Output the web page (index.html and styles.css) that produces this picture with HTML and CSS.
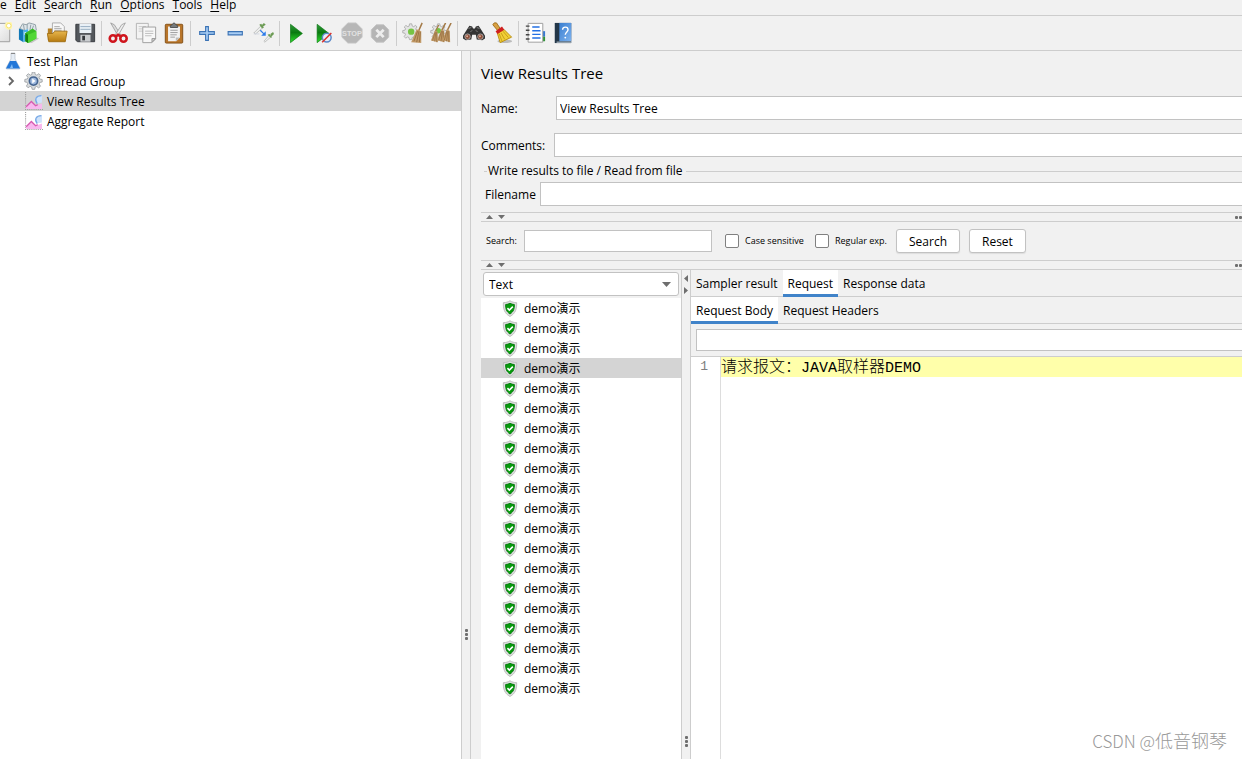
FILE: index.html
```html
<!DOCTYPE html>
<html lang="en">
<head>
<meta charset="utf-8">
<title>View Results Tree</title>
<link rel="stylesheet" href="styles.css">
</head>
<body>
<svg class="defs" aria-hidden="true">
  <defs>
    <linearGradient id="green" x1="0" y1="0" x2="0" y2="1"><stop offset="0" stop-color="#2f9a3a"/><stop offset=".45" stop-color="#0a7a10"/><stop offset="1" stop-color="#2fe02b"/></linearGradient>
    <linearGradient id="gold" x1="0" y1="0" x2="0" y2="1"><stop offset="0" stop-color="#e7b64c"/><stop offset="1" stop-color="#b67a10"/></linearGradient>
    <linearGradient id="paper" x1="0" y1="0" x2="1" y2="1"><stop offset="0" stop-color="#fff"/><stop offset="1" stop-color="#dcdcdc"/></linearGradient>
    <linearGradient id="blue" x1="0" y1="0" x2="1" y2="1"><stop offset="0" stop-color="#3b7fd0"/><stop offset="1" stop-color="#7db2ee"/></linearGradient>
    <g id="gear"><path d="M10 0h3l.6 3 2 .8L18 2l2 2.200-1.700 2.500.8 1.800 2.900.6v3l-3 .6-.8 1.900 1.800 2.600-2.200 2-2.500-1.700-1.800.8-.6 2.700h-3l-.6-2.800-1.900-.8-2.500 1.700-2-2.200 1.700-2.500-.8-1.900L1 12V9l3-.6.800-1.800L3 4.200l2.200-2.100 2.500 1.700 1.800-.8z"/></g>
    <symbol id="shield" viewBox="0 0 16 18"><path d="M8 .8C6 2.100 3.700 2.800 1 2.800 .6 9 2.200 14.500 8 17.400c5.800-2.900 7.400-8.400 7-14.600C12.300 2.800 10 2.100 8 .8z" fill="#dedede" stroke="#bdbdbd"/><path d="M8 3.500c-1.400.8-2.800 1.200-4.600 1.300C3.200 9 4.200 12.500 8 14.800c3.800-2.300 4.800-5.800 4.600-10C10.800 4.700 9.400 4.300 8 3.500z" fill="#079b0c" stroke="#0a7a12"/><path d="M5.300 8.600l2 2.100L11 7" fill="none" stroke="#fff" stroke-width="1.600"/></symbol>
    <symbol id="chart" viewBox="0 0 18 18"><path d="M1.500 0v16.500H18" fill="none" stroke="#9d9d9d" stroke-dasharray="1 1"/><path d="M2 14l5-5 4 4 6-2v5H2z" fill="#f8b8ee"/><path d="M2 14l5-5 4 4 2-1" fill="none" stroke="#d65ab0" stroke-width="1.200"/><path d="M17 3c-6 0-8 4-5 8l5-1z" fill="#cfe3fb"/><path d="M16.500 3.500c-5 0-7 3.500-4 7.500" fill="none" stroke="#7aaae6" stroke-width="1.200"/></symbol>
    <symbol id="broom" viewBox="0 0 12 22"><path d="M10.500 0L6 9" stroke="#a47a47" stroke-width="1.600"/><path d="M6 7l3 1.500L9.500 21 1 19z" fill="#c29a68"/><path d="M6 9L3 19M7 9l-1.500 11M8 9l0 12" stroke="#8d6537" stroke-width=".7" fill="none"/></symbol>
  </defs>
</svg>

<div class="app">
  <nav class="menubar" aria-label="Main menu">
    <button class="menu">e</button>
    <button class="menu"><u>E</u>dit</button>
    <button class="menu"><u>S</u>earch</button>
    <button class="menu"><u>R</u>un</button>
    <button class="menu"><u>O</u>ptions</button>
    <button class="menu"><u>T</u>ools</button>
    <button class="menu"><u>H</u>elp</button>
  </nav>

  <div class="toolbar" role="toolbar" aria-label="Tools">
    <button class="tool" aria-label="New"><svg viewBox="0 0 24 24"><path d="M3.500 1.500h18v20h-18z" fill="url(#paper)" stroke="#9a9a9a"/><circle cx="20.500" cy="4" r="4.500" fill="#fff6b0"/><circle cx="20.500" cy="4" r="2.500" fill="#fff" stroke="#f3df66"/></svg></button>
    <button class="tool" aria-label="Templates"><svg viewBox="0 0 24 24"><path d="M2 7l3-5 4 1 3-2 4 1 3 1 1 6-5 4z" fill="#dfe6ea" stroke="#8b9aa2"/><path d="M6 3l1 6M10 2l0 6M14 3l-1 6M17 4l-2 5" stroke="#8b9aa2"/><path d="M1 7l5 2v13l-5-3z" fill="#1178b8"/><path d="M6 9l5-1v12l-5 2z" fill="#48b2ea"/><path d="M7 11h2v3H7z" fill="#e8f6ff"/><path d="M20 17l3 1-8 5h-4z" fill="#aaa" opacity=".6"/><path d="M8 12l8-5 4 3v8l-9 5-3-2z" fill="#39bd25"/><path d="M8 12l3 2v9l-3-2z" fill="#167e0e"/><path d="M11 14l9-4v8l-9 5z" fill="#51d735"/></svg></button>
    <button class="tool" aria-label="Open"><svg viewBox="0 0 24 24"><path d="M2 7h5l2 2h11v11H2z" fill="#b78125"/><path d="M7 13V1h9l4 4v9z" fill="#f8f8f8" stroke="#aaa"/><path d="M9 5h6M9 7h8M9 9h8" stroke="#aaa"/><path d="M1.500 12.500l6 0 2-2.500h13.500L21 21.500H3z" fill="url(#gold)" stroke="#a26f13"/></svg></button>
    <button class="tool" aria-label="Save"><svg viewBox="0 0 24 24"><path d="M2 2.500h20.500v19H4l-2-1.500z" fill="#53575c" stroke="#33373b"/><path d="M6 2h13v10H6z" fill="#e9f0f6"/><path d="M7 5h11M7 8h11" stroke="#92a9bd"/><path d="M7 14h11v7.500H7z" fill="#c9cccf"/><path d="M9 15h3v5H9z" fill="#33373b"/></svg></button>
    <span class="sep"></span>
    <button class="tool" aria-label="Cut"><svg viewBox="0 0 24 24"><path d="M4 1l4 2 7 11-3 1z" fill="#ddd" stroke="#929292" stroke-width=".8"/><path d="M20 1l-4 2-7 11 3 1z" fill="#eee" stroke="#929292" stroke-width=".8"/><g fill="none" stroke="#cf151d" stroke-width="2.800"><ellipse cx="6.500" cy="18" rx="3.500" ry="3.500"/><ellipse cx="18" cy="18" rx="3.500" ry="3.500"/><path d="M9.500 16l2.500-2 3.500 2"/></g></svg></button>
    <button class="tool" aria-label="Copy"><svg viewBox="0 0 24 24"><path d="M1.500 1.500h13v17h-13z" fill="#f3f3f3" stroke="#b0b0b0"/><path d="M4 5h8M4 7.500h8M4 10h8" stroke="#c8c8c8"/><path d="M8.500 5.500h14v13l-4 4h-10z" fill="#f7f7f7" stroke="#9b9b9b"/><path d="M11 10h9M11 12.500h9M11 15h7" stroke="#bbb"/><path d="M18.500 22v-4h4z" fill="#ccc" stroke="#999"/></svg></button>
    <button class="tool" aria-label="Paste"><svg viewBox="0 0 24 24"><rect x="2.500" y="2.500" width="19" height="20.500" rx="1" fill="#b8752a" stroke="#7f4d14"/><path d="M5.500 5h13v12l-4 4h-9z" fill="#f2f2f2"/><path d="M8 9h8M8 11.500h8M8 14h7M8 16.500h5" stroke="#999"/><path d="M14 21v-4h4.500z" fill="#bbb"/><path d="M8 6V4l2-1q2-4 4 0l2 1v2z" fill="#777b7c" stroke="#4a4e50"/></svg></button>
    <span class="sep"></span>
    <button class="tool" aria-label="Expand all"><svg viewBox="0 0 24 24"><path d="M10.500 5h3v5.500H20v3h-6.500V20h-3v-6.500H4v-3h6.500z" fill="#a8cdf4" stroke="#3b73b5" stroke-width="1.200"/></svg></button>
    <button class="tool" aria-label="Collapse all"><svg viewBox="0 0 24 24"><path d="M4.500 10.500h15.500v3.500H4.500z" fill="#a8cdf4" stroke="#3b73b5" stroke-width="1.200"/></svg></button>
    <button class="tool" aria-label="Toggle"><svg viewBox="0 0 24 24"><path d="M2 12l8-8 2 2-8 7z" fill="#eef0ee" stroke="#aaa" stroke-width=".7"/><path d="M8 3l2-1 3 4-2 1zM11 3l2-2 2 2-3 2z" fill="#6d9c55"/><path d="M13 21l6-7 2 2-7 6z" fill="#eef0ee" stroke="#aaa" stroke-width=".7"/><path d="M17 14l2-1 3 4-2 0zM20 13l3-2 1 2-3 3z" fill="#6d9c55"/><path d="M2 13h6" stroke="#cfd5df"/><path d="M9 9l4 4" stroke="#2d7bea" stroke-width="1.400"/><path d="M15 10v5h-5z" fill="#2d7bea"/></svg></button>
    <span class="sep"></span>
    <button class="tool" aria-label="Start"><svg viewBox="0 0 24 24"><path d="M6 2.500l13 10-13 10z" fill="url(#green)" stroke="#0a7510" stroke-width=".7"/></svg></button>
    <button class="tool" aria-label="Start no pauses"><svg viewBox="0 0 24 24"><path d="M4.500 2.500l13 10-13 10z" fill="url(#green)" stroke="#0a7510" stroke-width=".7"/><circle cx="15" cy="17" r="4.800" fill="#e5eefb" stroke="#5a88c8" stroke-width="1.600"/><path d="M10 22l10-10" stroke="#dd3029" stroke-width="1.600"/></svg></button>
    <button class="tool" aria-label="Stop" disabled><svg viewBox="0 0 24 24"><path d="M7.500 1h9L23 7.500v9L16.500 23h-9L1 16.500v-9z" fill="#b7b7b7" stroke="#c7c7c7"/><text x="12" y="15.500" class="stop-text">STOP</text></svg></button>
    <button class="tool" aria-label="Shutdown" disabled><svg viewBox="0 0 24 24"><path d="M8 3h8l5.500 5.500v8L16 22H8l-5.500-5.500v-8z" fill="#b5b5b5" stroke="#c3c3c3"/><path d="M8 8.500l8 8M16 8.500l-8 8" stroke="#ededed" stroke-width="3"/></svg></button>
    <span class="sep"></span>
    <button class="tool" aria-label="Clear"><svg viewBox="0 0 24 24"><g fill="#e4e4e4" stroke="#a2a2a2"><use href="#gear" transform="translate(0 2) scale(.82)"/></g><circle cx="10" cy="10.500" r="3.500" fill="#76c443"/><path d="M22 1l-4 9" stroke="#a47a47" stroke-width="1.600"/><path d="M16 8l5 2 0 13-11-1z" fill="#c29a68"/><path d="M17 10l-4 11M18.500 10l-2.500 12M20 11l-1 11" stroke="#8d6537" stroke-width=".8" fill="none"/></svg></button>
    <button class="tool" aria-label="Clear all"><svg viewBox="0 0 24 24"><g fill="#e4e4e4" stroke="#a2a2a2"><use href="#gear" transform="translate(0 2) scale(.82)"/></g><circle cx="9" cy="9.500" r="3" fill="#76c443"/><use href="#broom" x="0" y="3" width="11" height="20"/><use href="#broom" x="6" y="1" width="13" height="22"/><use href="#broom" x="12" y="1" width="13" height="22"/></svg></button>
    <span class="sep"></span>
    <button class="tool" aria-label="Search"><svg viewBox="0 0 24 24"><path d="M5 7l2-3 3 1 1 2h2l1-2 3-1 2 3 5 8v3l-3 2-6-1-1-5h-4l-1 5-6 1-3-2v-3z" fill="#343434"/><path d="M6 7l3-1M15 6l3 1M8 11l2-2M14 9l2 2" stroke="#888"/><circle cx="5" cy="16" r="3" fill="#8e4f38" stroke="#aaa"/><circle cx="19" cy="16" r="3" fill="#8e4f38" stroke="#aaa"/><circle cx="4.500" cy="15.500" r="1" fill="#e2b09d"/><circle cx="18.500" cy="15.500" r="1" fill="#e2b09d"/></svg></button>
    <button class="tool" aria-label="Reset search"><svg viewBox="0 0 24 24"><ellipse cx="15" cy="21" rx="8" ry="2" fill="#bbb"/><path d="M2 3q1-3 4-2l4 6-3 2z" fill="#d9a142" stroke="#9d6b1c"/><path d="M7 12.500l7-4.500 8.500 8.500-12.500 6z" fill="#f1cf36" stroke="#b98d12"/><path d="M9 13l3 8M11 12l4 7M13 10l6 7" stroke="#c69b1a" fill="none"/><path d="M5 10l7-5 2.500 3.500-7.500 4.500z" fill="#cf2020"/></svg></button>
    <span class="sep"></span>
    <button class="tool" aria-label="Function helper"><svg viewBox="0 0 24 24"><path d="M19 10h4v6h-4z" fill="#3478d4"/><path d="M19 16h4v5h-4z" fill="#319538"/><path d="M4.500 1.500h16v20.500h-16z" fill="#fff" stroke="#999"/><path d="M9 5.500h8M9 9.500h9M9 13.500h9M9 17.500h9" stroke="#2370e4" stroke-width="1.500"/><path d="M2 4.500h4M2 9h4M2 14h4M2 18.500h4" stroke="#444" stroke-width="1.600"/></svg></button>
    <button class="tool" aria-label="Help"><svg viewBox="0 0 24 24"><path d="M3 1h18v22H3z" fill="#233648"/><path d="M8 1h13v20H8z" fill="url(#blue)"/><path d="M5 22h16" stroke="#dce7ee"/><path d="M11.500 8.500c.4-4 6-3.800 6 0 0 2.300-3 2.500-3 5.500" fill="none" stroke="#fff" stroke-width="1.500"/><circle cx="14.500" cy="17" r="1" fill="#fff"/></svg></button>
  </div>

  <main class="workspace">
    <aside class="plan">
      <ul class="plan-tree">
        <li class="plan-row root"><svg class="flask" viewBox="0 0 16 18"><path d="M6 1h4v6l5 9q0 1-1 1H2q-1 0-1-1l5-9z" fill="#e6edf5" stroke="#b4bfca" stroke-width=".7"/><path d="M5 9h6l4 7.500H1z" fill="#2277d8"/><path d="M7 12l-2 4h3z" fill="#83bdf5"/><path d="M6 1.500h4" stroke="#888"/></svg><span>Test Plan</span></li>
        <li class="plan-row branch"><svg class="twisty" viewBox="0 0 10 10"><path d="M3 1l4 4-4 4" fill="none" stroke="#666" stroke-width="1.800"/></svg><svg class="icon" viewBox="0 0 23 23"><g fill="#d9dcde" stroke="#9a9ea2"><use href="#gear"/></g><circle cx="11.500" cy="11" r="5" fill="#9eb9df" stroke="#45648f" stroke-width="2"/><path d="M10 8l4 3-4 3z" fill="#fff"/></svg><span>Thread Group</span></li>
        <li class="plan-row leaf selected"><svg class="icon"><use href="#chart"/></svg><span>View Results Tree</span></li>
        <li class="plan-row leaf"><svg class="icon"><use href="#chart"/></svg><span>Aggregate Report</span></li>
      </ul>
    </aside>

    <div class="divider-v main-divider"><span class="dots-v"><i></i><i></i><i></i></span></div>

    <section class="editor">
      <h1 class="title">View Results Tree</h1>
      <div class="field name-field"><label for="name">Name:</label><input id="name" class="box" type="text" value="View Results Tree"></div>
      <div class="field comments-field"><label for="comments">Comments:</label><input id="comments" class="box" type="text"></div>
      <div class="group-head"><span>Write results to file / Read from file</span></div>
      <div class="field file-field"><label for="filename">Filename</label><input id="filename" class="box" type="text"></div>

      <div class="divider-h"><svg class="arrows" viewBox="0 0 22 8"><path d="M1 6l3.500-4L8 6zM13 2h7l-3.500 4z"/></svg><span class="dots-h"><i></i><i></i></span></div>

      <form class="search-bar">
        <label class="small" for="query">Search:</label>
        <input id="query" class="box query" type="text">
        <label class="small check case"><input type="checkbox">Case sensitive</label>
        <label class="small check regex"><input type="checkbox">Regular exp.</label>
        <button class="btn" type="button">Search</button>
        <button class="btn" type="reset">Reset</button>
      </form>

      <div class="divider-h"><svg class="arrows" viewBox="0 0 22 8"><path d="M1 6l3.500-4L8 6zM13 2h7l-3.500 4z"/></svg><span class="dots-h"><i></i><i></i></span></div>

      <div class="results">
        <div class="samples">
          <div class="renderer">
            <select aria-label="Renderer"><option>Text</option></select>
            <svg class="caret" viewBox="0 0 9 5"><path d="M0 0h9L4.500 5z"/></svg>
          </div>
          <ul class="sample-list">
            <li><svg><use href="#shield"/></svg><span>demo演示</span></li>
            <li><svg><use href="#shield"/></svg><span>demo演示</span></li>
            <li><svg><use href="#shield"/></svg><span>demo演示</span></li>
            <li class="selected"><svg><use href="#shield"/></svg><span>demo演示</span></li>
            <li><svg><use href="#shield"/></svg><span>demo演示</span></li>
            <li><svg><use href="#shield"/></svg><span>demo演示</span></li>
            <li><svg><use href="#shield"/></svg><span>demo演示</span></li>
            <li><svg><use href="#shield"/></svg><span>demo演示</span></li>
            <li><svg><use href="#shield"/></svg><span>demo演示</span></li>
            <li><svg><use href="#shield"/></svg><span>demo演示</span></li>
            <li><svg><use href="#shield"/></svg><span>demo演示</span></li>
            <li><svg><use href="#shield"/></svg><span>demo演示</span></li>
            <li><svg><use href="#shield"/></svg><span>demo演示</span></li>
            <li><svg><use href="#shield"/></svg><span>demo演示</span></li>
            <li><svg><use href="#shield"/></svg><span>demo演示</span></li>
            <li><svg><use href="#shield"/></svg><span>demo演示</span></li>
            <li><svg><use href="#shield"/></svg><span>demo演示</span></li>
            <li><svg><use href="#shield"/></svg><span>demo演示</span></li>
            <li><svg><use href="#shield"/></svg><span>demo演示</span></li>
            <li><svg><use href="#shield"/></svg><span>demo演示</span></li>
          </ul>
        </div>

        <div class="divider-v result-divider"><svg class="arrows" viewBox="0 0 8 22"><path d="M6 1v7L2 4.500zM2 13v7l4-3.500z"/></svg><span class="dots-v"><i></i><i></i><i></i></span></div>

        <div class="detail">
          <div class="tabs" role="tablist">
            <button class="tab" role="tab">Sampler result</button>
            <button class="tab active" role="tab" aria-selected="true">Request</button>
            <button class="tab" role="tab">Response data</button>
          </div>
          <div class="tabs" role="tablist">
            <button class="tab active" role="tab" aria-selected="true">Request Body</button>
            <button class="tab" role="tab">Request Headers</button>
          </div>
          <div class="find"><input class="box" type="text" aria-label="Find"></div>
          <div class="code">
            <div class="gutter">1</div>
            <div class="lines"><div class="line"><span class="han">请求报文：</span>JAVA<span class="han">取样器</span>DEMO</div></div>
          </div>
        </div>
      </div>
    </section>
  </main>
  <div class="watermark">CSDN @<span class="watermark-name">低音钢琴</span></div>
</div>
</body>
</html>
```
FILE: styles.css
```css
* { box-sizing: border-box; }

body {
  margin: 0;
  background: #f1f1f1;
  color: #000;
  font: 12px/20px "Open Sans", "Noto Sans CJK SC", sans-serif;
}

button, input, select { font: inherit; color: inherit; }
button { background: none; border: 0; padding: 0; }
ul { list-style: none; margin: 0; padding: 0; }
svg { display: block; flex: none; }

.defs { position: absolute; width: 0; height: 0; }

.app {
  position: relative;
  display: flex;
  flex-direction: column;
  height: 100vh;
  overflow: hidden;
}

/* Menu and toolbar */
.menubar {
  display: flex;
  align-items: flex-start;
  gap: 8px;
  height: 16px;
  flex: none;
  border-bottom: 1px solid #cdcdcd;
}
.menu { line-height: 10px; }
.menu u { text-underline-offset: 2px; }

.toolbar {
  display: flex;
  align-items: center;
  flex: none;
  height: 35px;
  margin-left: -13px;
  border-bottom: 1px solid #cdcdcd;
}
.tool { flex: none; width: 28px; padding: 0 3px; }
.tool svg { width: 22px; height: 22px; }
.sep { width: 1px; height: 25px; margin: 0 2px; background: #cdcdcd; }
.stop-text { font: bold 8px "Liberation Sans", sans-serif; fill: #e2e2e2; text-anchor: middle; }

/* Workspace */
.workspace { display: flex; flex: 1; min-height: 0; }
.plan { flex: none; width: 461px; background: #fff; }
.plan-row { display: flex; align-items: center; height: 20px; gap: 4px; }
.plan-row span, .sample-list span { padding-top: 2px; }
.plan-row.root { padding-left: 5px; gap: 6px; }
.plan-row.branch { padding-left: 6px; }
.plan-row.leaf { padding-left: 24px; }
.selected { background: #d4d4d4; }
.flask { width: 16px; height: 18px; }
.twisty { width: 10px; height: 10px; }
.icon { width: 19px; height: 19px; }
.branch .twisty { margin-right: 4px; }

/* Split dividers */
.divider-v {
  display: flex;
  flex-direction: column;
  align-items: center;
  flex: none;
  width: 10px;
  border: solid #cdcdcd;
  border-width: 0 1px;
}
.divider-h {
  display: flex;
  align-items: center;
  justify-content: space-between;
  flex: none;
  height: 10px;
  padding-left: 4px;
  border: solid #cdcdcd;
  border-width: 1px 0;
}
.arrows { fill: #6e6e6e; }
.divider-h .arrows { width: 22px; height: 8px; }
.divider-v .arrows { width: 8px; height: 22px; margin-top: 4px; }
.dots-v, .dots-h { display: flex; gap: 1px; }
.dots-v { flex-direction: column; }
.dots-v i, .dots-h i { width: 3px; height: 3px; border-radius: 1px; background: #6e6e6e; }
.main-divider { justify-content: flex-end; padding-bottom: 119px; }
.result-divider { justify-content: space-between; padding-bottom: 12px; }

/* Element editor */
.editor {
  display: flex;
  flex-direction: column;
  flex: 1;
  min-width: 0;
  padding-left: 10px;
}
.title { margin: 12px 0 13px; font-size: 15px; font-weight: 400; line-height: 20px; }
.box {
  width: 100%;
  min-width: 0;
  height: 24px;
  padding: 1px 3px 0;
  background: #fff;
  border: 1px solid #c2c2c2;
  border-radius: 0;
  outline: 0;
}
.field { display: flex; align-items: center; flex: none; }
.field label { flex: none; padding-top: 2px; }
.field .box, .find .box { border-right: 0; }
.name-field label { width: 75px; }
.comments-field { margin-top: 13px; }
.comments-field label { width: 73px; }
.group-head { display: flex; align-items: center; gap: 3px; height: 20px; margin: 4px 0 1px 3px; white-space: nowrap; }
.group-head::before, .group-head::after { content: ""; height: 1px; width: 3px; background: #cdcdcd; }
.group-head::after { flex: 1; }
.group-head::before { margin-right: -2px; }
.file-field { padding-left: 4px; margin-bottom: 6px; }
.file-field label { width: 55px; }

.search-bar { display: flex; align-items: center; flex: none; height: 38px; padding-left: 5px; }
.small { font-size: 9px; }
.search-bar > .small:first-child { width: 38px; }
.query { flex: none; width: 188px; height: 22px; }
.check { display: flex; align-items: center; gap: 6px; white-space: nowrap; }
.check input {
  appearance: none;
  width: 14px;
  height: 14px;
  margin: 0;
  background: #fff;
  border: 1px solid #808080;
  border-radius: 2px;
}
.case { width: 90px; margin-left: 13px; }
.regex { width: 81px; }
.btn {
  height: 24px;
  margin-right: 9px;
  padding: 1px 12px 0;
  line-height: 22px;
  background: #fff;
  border: 1px solid #c2c2c2;
  border-radius: 3px;
  box-shadow: 0 1px 1px #ddd;
}

/* Results */
.results { display: flex; flex: 1; min-height: 0; }
.samples { display: flex; flex-direction: column; flex: none; width: 200px; }
.renderer { position: relative; flex: none; padding: 2px; }
.renderer select {
  display: block;
  appearance: none;
  width: 196px;
  height: 24px;
  padding: 2px 5px 0;
  background: #fff;
  border: 1px solid #c2c2c2;
  border-radius: 3px;
}
.caret { position: absolute; right: 10px; top: 12px; width: 9px; height: 5px; fill: #6e6e6e; }
.sample-list { flex: 1; background: #fff; }
.sample-list li { display: flex; align-items: center; gap: 6px; height: 20px; padding-left: 21px; }
.sample-list svg { width: 16px; height: 17px; }

.detail { display: flex; flex-direction: column; flex: 1; min-width: 0; }
.tabs { display: flex; flex: none; height: 27px; border-bottom: 1px solid #cdcdcd; }
.tab { height: 27px; padding: 0 5px; line-height: 27px; white-space: nowrap; }
.tab.active { background: #fff; box-shadow: inset 0 -3px #4083c9; }
.find { padding: 5px 0 5px 5px; border-bottom: 1px solid #cdcdcd; }
.find .box { display: block; height: 22px; }
.code {
  display: flex;
  flex: 1;
  background: #fff;
  font: 15px/20px "Liberation Mono", "Noto Sans CJK SC", monospace;
}
.gutter { width: 30px; padding-right: 12px; border-right: 1px solid #ddd; color: #808080; font-size: 13px; text-align: right; }
.lines { flex: 1; min-width: 0; }
.line { height: 20px; line-height: 16px; background: #ffffaa; white-space: nowrap; }
.han { font-family: "Noto Sans CJK SC", sans-serif; font-size: 16px; font-weight: 300; }

.watermark {
  position: absolute;
  right: 15px;
  bottom: 7px;
  color: #999;
  font: 300 17px/22px "Noto Sans CJK SC", sans-serif;
}
.watermark-name { font-size: 18px; }
```
